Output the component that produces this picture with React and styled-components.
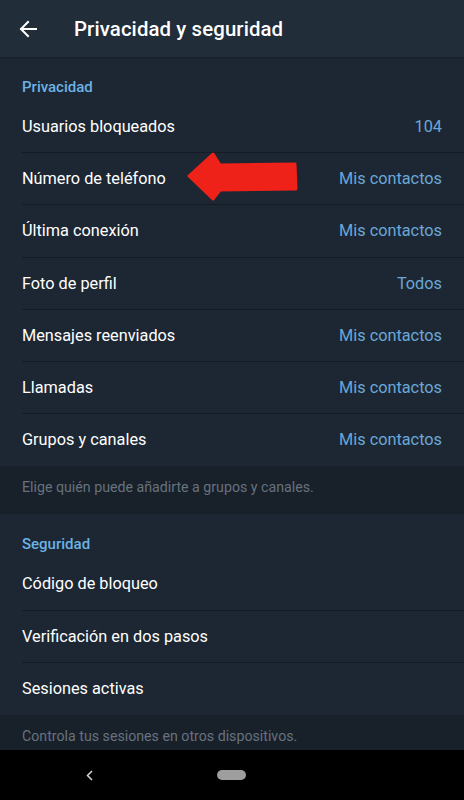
import React from "react";
import styled, { createGlobalStyle } from "styled-components";

const GlobalStyle = createGlobalStyle`
  html, body {
    margin: 0;
    padding: 0;
    background: #1d2733;
  }
  body {
    font-family: Roboto, "Noto Sans", "Liberation Sans", sans-serif;
    -webkit-font-smoothing: antialiased;
  }
`;

const Screen = styled.div`
  width: 464px;
  height: 800px;
  display: flex;
  flex-direction: column;
  overflow: hidden;
  background: #1d2733;
`;

const TopBar = styled.header`
  height: 57px;
  flex-shrink: 0;
  display: flex;
  align-items: center;
  gap: 37px;
  padding-left: 19px;
  background: #222d3a;
  box-shadow: 0 1px 2px rgba(0, 0, 0, 0.25);
  position: relative;
  z-index: 1;
`;

const Title = styled.h1`
  margin: 0;
  color: #ffffff;
  font-size: 20.4px;
  font-weight: 500;
  letter-spacing: 0.1px;
`;

const Content = styled.main`
  flex: 1;
  overflow: hidden;
  display: flex;
  flex-direction: column;
`;

const Section = styled.section`
  background: #1d2733;
`;

const SectionTitle = styled.div`
  height: 44px;
  box-sizing: border-box;
  padding: 21px 22px 0;
  color: #6cb2e4;
  font-size: 15px;
  font-weight: 500;
  line-height: 18px;
`;

const Row = styled.div`
  position: relative;
  height: 52.2px;
  box-sizing: border-box;
  padding: 0 22px 1px;
  display: flex;
  align-items: center;
  justify-content: space-between;
  &::after {
    content: "";
    display: ${(p) => (p.$last ? "none" : "block")};
    position: absolute;
    left: 22px;
    right: 0;
    bottom: 0;
    height: 1px;
    background: #141b24;
  }
`;

const Label = styled.span`
  color: #ffffff;
  font-size: 16.3px;
`;

const Value = styled.span`
  color: #6aa7d8;
  font-size: 16.3px;
`;

const Info = styled.div`
  height: 48px;
  flex-shrink: 0;
  box-sizing: border-box;
  padding: 13px 22px 0;
  line-height: 16px;
  background: #18202a;
  color: #67727e;
  font-size: 14.2px;
`;

const Pointer = styled.svg`
  position: absolute;
  left: 186px;
  top: -4px;
`;

const NavBar = styled.nav`
  height: 50px;
  flex-shrink: 0;
  display: flex;
  align-items: center;
  gap: 124px;
  padding-left: 86px;
  background: #000000;
`;

const Pill = styled.div`
  width: 29px;
  height: 10px;
  border-radius: 5px;
  background: #9e9e9e;
`;

const BackArrow = () => (
  <svg width="18" height="18" viewBox="0 0 18 18" fill="none">
    <path
      d="M17 9H2M9 2L2 9l7 7"
      stroke="#ffffff"
      strokeWidth="2"
      strokeLinecap="square"
    />
  </svg>
);

const NavBack = () => (
  <svg width="7" height="11" viewBox="0 0 7 11" fill="none">
    <path d="M6 1L1.5 5.5 6 10" stroke="#d8d8d8" strokeWidth="1.5" />
  </svg>
);

const RedArrow = () => (
  <Pointer width="114" height="54" viewBox="0 0 114 54">
    <polygon
      points="3,27 27,5 34,16 109,15 110,40 34,41 27,50"
      fill="#ef2219"
      stroke="#ef2219"
      strokeWidth="3"
      strokeLinejoin="round"
    />
  </Pointer>
);

const privacy = [
  { label: "Usuarios bloqueados", value: "104" },
  { label: "Número de teléfono", value: "Mis contactos", marked: true },
  { label: "Última conexión", value: "Mis contactos" },
  { label: "Foto de perfil", value: "Todos" },
  { label: "Mensajes reenviados", value: "Mis contactos" },
  { label: "Llamadas", value: "Mis contactos" },
  { label: "Grupos y canales", value: "Mis contactos" },
];

const security = [
  { label: "Código de bloqueo" },
  { label: "Verificación en dos pasos" },
  { label: "Sesiones activas" },
];

const App = () => {
  return (
    <Screen>
      <GlobalStyle />
      <TopBar>
        <BackArrow />
        <Title>Privacidad y seguridad</Title>
      </TopBar>
      <Content>
        <Section>
          <SectionTitle>Privacidad</SectionTitle>
          {privacy.map((item, index) => (
            <Row key={item.label} $last={index === privacy.length - 1}>
              <Label>{item.label}</Label>
              <Value>{item.value}</Value>
              {item.marked && <RedArrow />}
            </Row>
          ))}
        </Section>
        <Info>Elige quién puede añadirte a grupos y canales.</Info>
        <Section>
          <SectionTitle>Seguridad</SectionTitle>
          {security.map((item, index) => (
            <Row key={item.label} $last={index === security.length - 1}>
              <Label>{item.label}</Label>
            </Row>
          ))}
        </Section>
        <Info>Controla tus sesiones en otros dispositivos.</Info>
      </Content>
      <NavBar>
        <NavBack />
        <Pill />
      </NavBar>
    </Screen>
  );
};

export default App;
